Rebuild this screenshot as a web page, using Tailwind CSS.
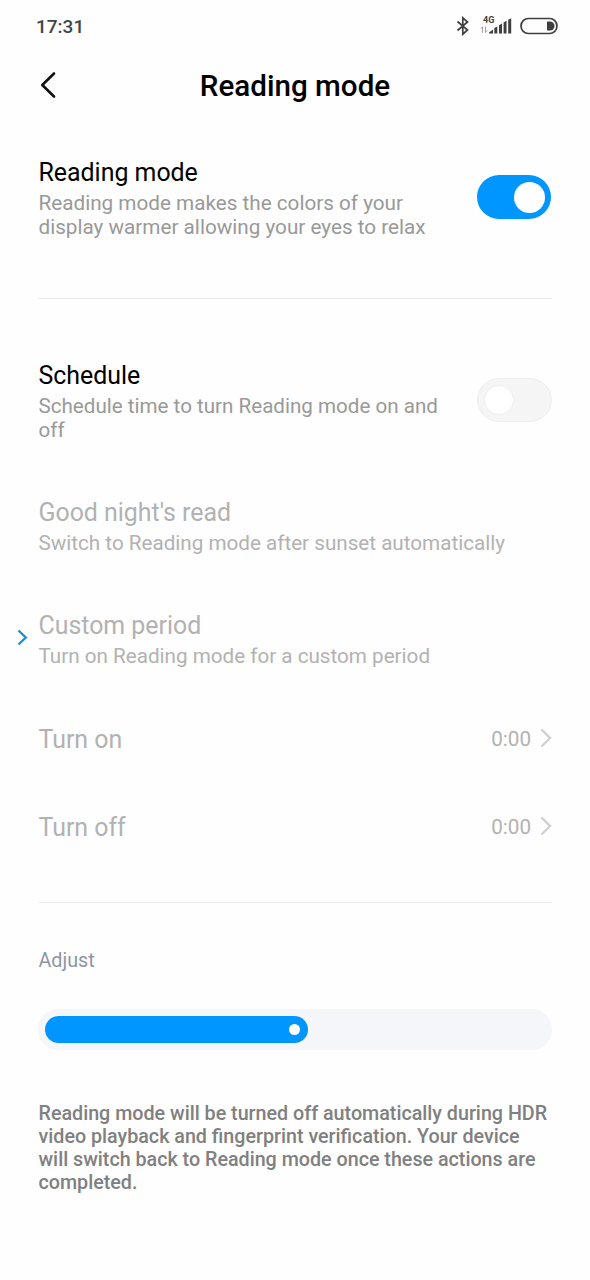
<!DOCTYPE html>
<html lang="en">
<head>
    <meta charset="UTF-8">
    <meta name="viewport" content="width=device-width, initial-scale=1.0">
    <title>Reading mode</title>
    <script src="https://cdn.jsdelivr.net/npm/@tailwindcss/browser@4"></script>
</head>
<body class="bg-[#fefefe] font-['Roboto',sans-serif] text-black">
    <div class="w-[590px] h-[1280px] overflow-hidden pl-[38px] pr-[38px]">
        <!-- Status bar -->
        <div class="h-[52px] flex items-center justify-between -ml-[2px] -mr-[6px]">
            <span class="mt-[2px] text-[19px] font-medium text-[#444]">17:31</span>
            <div class="flex items-center">
                <svg class="w-[14px] h-[20px]" viewBox="0 0 14 20" fill="none" stroke="#3f3f3f" stroke-width="1.7"><path d="M1.5 5.5 L11.5 14 L6.8 18.2 V1.8 L11.5 6 L1.5 14.5"/></svg>
                <div class="relative ml-[10px] w-[32px] h-[20px]">
                    <span class="absolute left-[3px] -top-[1px] text-[9px] leading-[10px] font-bold text-[#3f3f3f]">4G</span>
                    <svg class="w-[32px] h-[20px]" viewBox="0 0 32 20">
                        <path d="M2.5 16.8V10.8M0.8 12.8L2.5 10.8M5.5 10.5v6M7.2 14.5L5.5 16.5" fill="none" stroke="#a0a0a0"/>
                        <path d="M9 17.5V16.5L13 13.5V17.5ZM14.3 17.5V12L17.3 10.5V17.5ZM19 17.5V9.2L22 7.5V17.5ZM23.6 17.5V6.5L26.5 4.8V17.5ZM28.2 17.5V3.8L31.2 2.2V17.5Z" fill="#3f3f3f"/>
                    </svg>
                </div>
                <svg class="ml-[8px] w-[38px] h-[18px]" viewBox="0 0 38 18"><rect x="1" y="1.5" width="36" height="15" rx="7.5" fill="none" stroke="#3f3f3f" stroke-width="1.7"/><path d="M27 4.5h3a4.5 4.5 0 0 1 0 9h-3z" fill="#3f3f3f"/></svg>
            </div>
        </div>

        <!-- Header -->
        <div class="relative h-[104px] flex justify-center">
            <svg class="absolute left-[2px] top-[19px] w-[17px] h-[28px]" viewBox="0 0 17 28" fill="none" stroke="#111" stroke-width="2.6" stroke-linecap="round" stroke-linejoin="round"><path d="M14 2.5L2.3 14L14 25.5"/></svg>
            <h1 class="mt-[16px] text-[29.6px] leading-[36px] font-medium whitespace-nowrap">Reading mode</h1>
        </div>

        <div class="h-[143px] border-b border-[#ebebeb] flex justify-between">
            <div class="pl-[0.5px] pt-px">
                <h2 class="text-[24.9px] leading-[32px]">Reading mode</h2>
                <p class="mt-[2px] text-[20.7px] leading-[24px] text-[#999] whitespace-nowrap">Reading mode makes the colors of your<br>display warmer allowing your eyes to relax</p>
            </div>
            <div class="mt-[19px] mr-px w-[74px] h-[44px] rounded-full bg-[#0096ff] flex items-center justify-end pr-[6px]">
                <div class="size-[31px] rounded-full bg-white"></div>
            </div>
        </div>

        <!-- Schedule -->
        <div class="mt-[61px] h-[137px] flex justify-between">
            <div class="pl-[0.5px]">
                <h2 class="text-[24.9px] leading-[32px]">Schedule</h2>
                <p class="mt-[2px] text-[20.6px] leading-[24px] text-[#999] whitespace-nowrap">Schedule time to turn Reading mode on and<br>off</p>
            </div>
            <div class="mt-[18px] w-[75px] h-[44px] rounded-full bg-[#f5f5f5] border border-[#efefef] flex items-center pl-[6px]">
                <div class="size-[30px] rounded-full bg-white border border-[#f0f0f0]"></div>
            </div>
        </div>
        <div class="h-[112px] pl-[0.5px] text-[#b2b2b2]">
            <h2 class="text-[24.9px] leading-[32px]">Good night's read</h2>
            <p class="mt-[2px] text-[20.65px] leading-[24px]">Switch to Reading mode after sunset automatically</p>
        </div>
        <div class="relative h-[87px] pl-[0.5px] pt-px text-[#b2b2b2]">
            <svg class="absolute -left-[21px] top-[20px] w-[11px] h-[17px]" viewBox="0 0 11 17" fill="none" stroke="#1d8fd6" stroke-width="2.4"><path d="M1.5 1.5L8.8 8.5L1.5 15.5"/></svg>
            <h2 class="text-[24.9px] leading-[32px]">Custom period</h2>
            <p class="mt-[2px] text-[20.65px] leading-[24px]">Turn on Reading mode for a custom period</p>
        </div>
        <div class="h-[88px] pl-[0.5px] flex items-center justify-between text-[#b2b2b2]">
            <h2 class="text-[24.9px] leading-[32px]">Turn on</h2>
            <div class="flex items-center -mt-[2px]">
                <span class="text-[20.65px] leading-[24px]">0:00</span>
                <svg class="ml-[9px] w-[12px] h-[20px] -mt-[2px]" viewBox="0 0 12 20" fill="none" stroke="#d0d0d0" stroke-width="2.4"><path d="M1.5 1.5L10 10L1.5 18.5"/></svg>
            </div>
        </div>
        <div class="h-[87px] pl-[0.5px] flex items-center justify-between text-[#b2b2b2]">
            <h2 class="text-[24.9px] leading-[32px]">Turn off</h2>
            <div class="flex items-center -mt-[2px]">
                <span class="text-[20.65px] leading-[24px]">0:00</span>
                <svg class="ml-[9px] w-[12px] h-[20px] -mt-[2px]" viewBox="0 0 12 20" fill="none" stroke="#d0d0d0" stroke-width="2.4"><path d="M1.5 1.5L10 10L1.5 18.5"/></svg>
            </div>
        </div>

        <!-- Color temperature -->
        <div class="mt-[31px] pt-[46px] border-t border-[#ebebeb]">
            <h3 class="pl-[0.5px] text-[19.7px] leading-[24px] text-[#8c96a3]">Adjust</h3>
            <div class="mt-[36px] h-[41px] rounded-full bg-[#f4f6fa] p-[7px]">
                <div class="w-[263px] h-[27px] rounded-full bg-[#0096ff] flex items-center justify-end pr-[8px]">
                    <div class="size-[11px] rounded-full bg-white"></div>
                </div>
            </div>
        </div>
        <p class="mt-[52px] pl-[0.5px] text-[19.7px] leading-[23px] font-medium text-[#808080] whitespace-nowrap">Reading mode will be turned off automatically during HDR<br>video playback and fingerprint verification. Your device<br>will switch back to Reading mode once these actions are<br>completed.</p>
    </div>
</body>
</html>
